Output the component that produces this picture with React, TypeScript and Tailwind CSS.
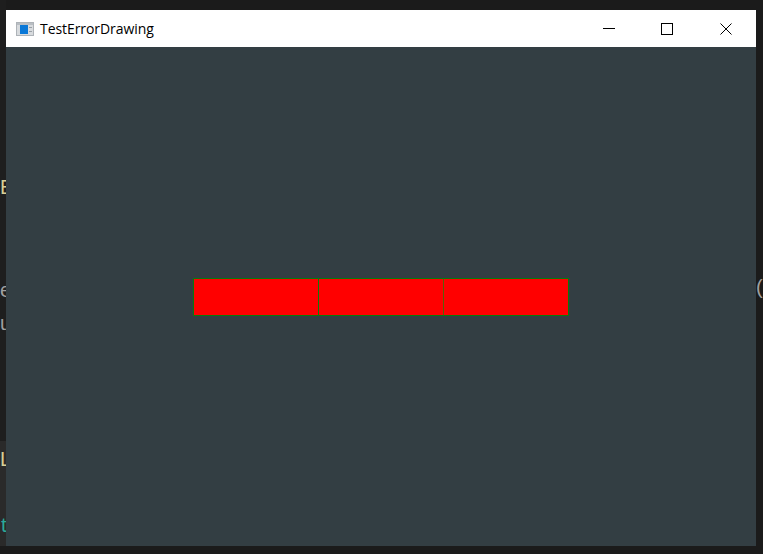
export default function App() {
  return (
    <div className="flex h-[554px] w-[763px] overflow-hidden bg-[#1b1b1b] font-['Open_Sans','Noto_Sans',sans-serif]">
      <div className="relative flex w-[6px] shrink-0 flex-col overflow-hidden font-['Liberation_Sans',sans-serif] text-[20px]">
        <div className="h-[441px] bg-[#1e1e1e]" />
        <div className="h-[105px] bg-[#2a2a2a]" />
        <div className="flex-1 bg-[#1b1b1b]" />
        <span className="absolute left-0 top-[172px] text-[#d8cf96]">E</span>
        <span className="absolute left-0 top-[275px] text-[#a0a0a0]">e</span>
        <span className="absolute left-0 top-[308px] text-[#a0a0a0]">u</span>
        <span className="absolute left-0 top-[444px] text-[#d8cf96]">L</span>
        <span className="absolute left-[1px] top-[510px] text-[#2aa99a]">t</span>
      </div>
      <div className="mt-[10px] flex h-[536px] w-[750px] shrink-0 flex-col">
        <div className="flex h-[37px] items-center bg-white pl-[10px] text-[14px] text-black">
          <svg width="18" height="14" viewBox="0 0 18 14" className="shrink-0">
            <rect width="18" height="14" fill="#aeb3b8" />
            <rect x="1" y="1" width="16" height="12" fill="#d8dbde" />
            <rect x="1" y="1" width="16" height="2" fill="#b9bec3" />
            <rect x="4" y="3" width="8" height="9" fill="#0a78d7" />
            <rect x="13" y="5" width="3" height="1" fill="#9aa0a6" />
            <rect x="13" y="9" width="3" height="1" fill="#9aa0a6" />
          </svg>
          <span className="ml-[6px] whitespace-nowrap tracking-[-0.07px]">TestErrorDrawing</span>
          <div className="ml-auto flex h-full">
            <div className="flex w-[58px] items-center justify-center">
              <svg width="12" height="12" viewBox="0 0 12 12"><path d="M0 5.5H12" stroke="#000" strokeWidth="1" /></svg>
            </div>
            <div className="flex w-[58px] items-center justify-center">
              <svg width="12" height="12" viewBox="0 0 12 12"><rect x="0.5" y="0.5" width="11" height="11" fill="none" stroke="#000" strokeWidth="1" /></svg>
            </div>
            <div className="flex w-[60px] items-center justify-center">
              <svg width="12" height="12" viewBox="0 0 12 12"><path d="M0.5 0.5L11.5 11.5M11.5 0.5L0.5 11.5" stroke="#000" strokeWidth="1" /></svg>
            </div>
          </div>
        </div>
        <div className="flex flex-1 items-center justify-center bg-[#333e43]">
          <div className="flex h-[38px] w-[376px] border-[1.5px] border-[#0a7a0a] bg-[#ff0000]">
            <div className="w-[124px] shrink-0" />
            <div className="w-[1px] shrink-0 bg-[#0f7a0a]" />
            <div className="w-[124px] shrink-0" />
            <div className="w-[1px] shrink-0 bg-[#5a6208]" />
            <div className="flex-1" />
          </div>
        </div>
      </div>
      <div className="relative w-[7px] shrink-0 overflow-hidden bg-[#1b1b1b] font-['Liberation_Sans',sans-serif] text-[20px]">
        <span className="absolute left-0 top-[272px] text-[#a0a0a0]">(</span>
      </div>
    </div>
  );
}
